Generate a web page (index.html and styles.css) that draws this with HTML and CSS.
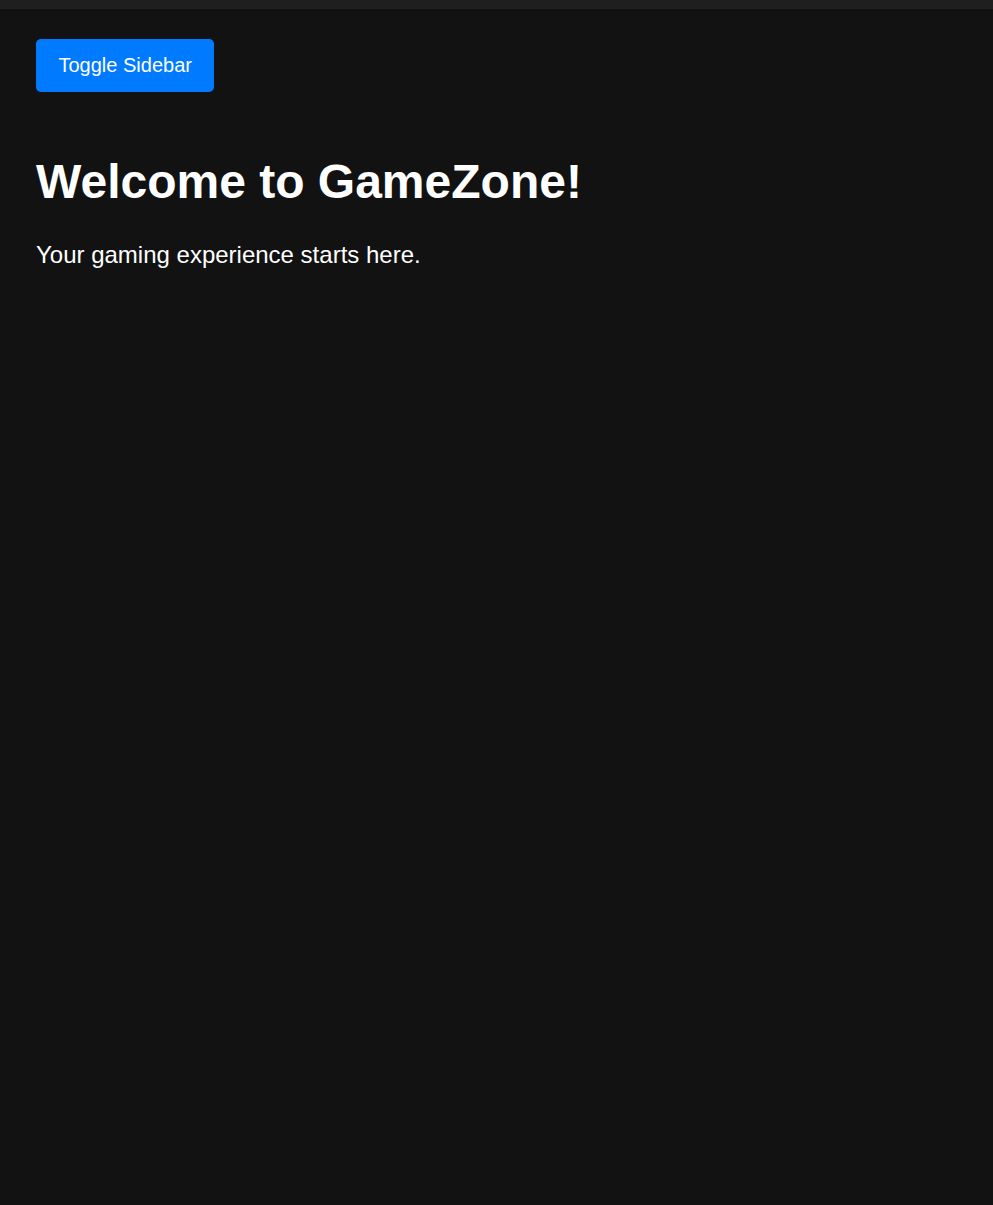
FILE: index.html
```html
<!DOCTYPE html>
<html lang="en">
<head>
<meta charset="utf-8">
<title>GameZone</title>
<link rel="stylesheet" href="styles.css">
</head>
<body>
<div class="topbar"></div>
<main class="content">
  <button class="toggle-btn">Toggle Sidebar</button>
  <h1 class="title">Welcome to GameZone!</h1>
  <p class="subtitle">Your gaming experience starts here.</p>
</main>
</body>
</html>
```

FILE: styles.css
```css
html, body {
  margin: 0;
  padding: 0;
  height: 100%;
}
body {
  background: #121212;
  color: #ffffff;
  font-family: "Liberation Sans", Arial, sans-serif;
}
.topbar {
  height: 9px;
  background: #1f1f1f;
}
.content {
  padding: 30px 36px;
}
.toggle-btn {
  display: block;
  background: #007bff;
  color: #ffffff;
  border: none;
  border-radius: 5px;
  font-family: "Liberation Sans", Arial, sans-serif;
  font-size: 20px;
  line-height: 23px;
  padding: 15px 22.5px;
  cursor: pointer;
}
.title {
  font-size: 48px;
  font-weight: bold;
  margin: 61px 0 0;
  line-height: 1.2;
}
.subtitle {
  font-size: 24px;
  margin: 30px 0 0;
}
```
